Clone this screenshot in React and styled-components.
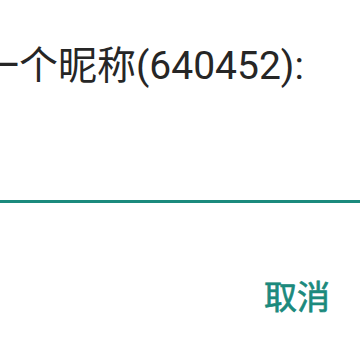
import React from 'react';
import styled, { createGlobalStyle } from 'styled-components';

const GlobalStyle = createGlobalStyle`
  html, body {
    margin: 0;
    padding: 0;
    background: #ffffff;
  }
  body {
    font-family: Roboto, "Noto Sans CJK SC", sans-serif;
  }
`;

const Dialog = styled.div`
  width: 360px;
  height: 360px;
  overflow: hidden;
  display: flex;
  flex-direction: column;
  background: #ffffff;
`;

const Message = styled.div`
  margin: 38px 0 0 -20px;
  font-size: 39px;
  line-height: 56px;
  color: #262626;
  white-space: nowrap;
`;

const Field = styled.input`
  display: block;
  margin: 58px 0 0 -20px;
  width: 400px;
  height: 48px;
  padding: 0;
  border: none;
  border-bottom: 3px solid #1b8a7d;
  outline: none;
  background: transparent;
  font-size: 36px;
  font-family: inherit;
`;

const Actions = styled.div`
  display: flex;
  justify-content: flex-end;
  padding: 75px 30px 0 0;
`;

const Button = styled.button`
  border: none;
  background: none;
  padding: 0;
  font-family: Roboto, "Noto Sans CJK SC", sans-serif;
  font-size: 33px;
  font-weight: 400;
  -webkit-text-stroke: 0.7px #1b8a7d;
  line-height: 40px;
  color: #1b8a7d;
`;

function App() {
  return (
    <>
      <GlobalStyle />
      <Dialog>
        <Message>一个昵称(640452):</Message>
        <Field type="text" />
        <Actions>
          <Button>取消</Button>
        </Actions>
      </Dialog>
    </>
  );
}

export default App;
